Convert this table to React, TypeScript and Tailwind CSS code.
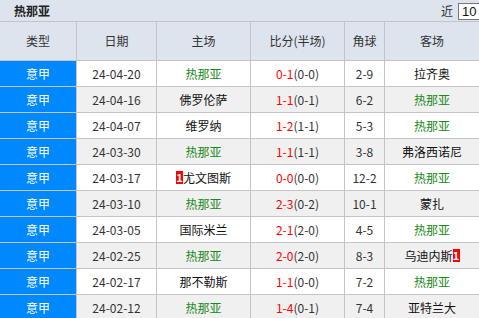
import React from "react";

type Row = {
  date: string;
  home: string;
  homeGreen?: boolean;
  homeBadge?: boolean;
  ft: string;
  ht: string;
  corner: string;
  away: string;
  awayGreen?: boolean;
  awayBadge?: boolean;
};

const rows: Row[] = [
  { date: "24-04-20", home: "热那亚", homeGreen: true, ft: "0-1", ht: "(0-0)", corner: "2-9", away: "拉齐奥" },
  { date: "24-04-16", home: "佛罗伦萨", ft: "1-1", ht: "(0-1)", corner: "6-2", away: "热那亚", awayGreen: true },
  { date: "24-04-07", home: "维罗纳", ft: "1-2", ht: "(1-1)", corner: "5-3", away: "热那亚", awayGreen: true },
  { date: "24-03-30", home: "热那亚", homeGreen: true, ft: "1-1", ht: "(1-1)", corner: "3-8", away: "弗洛西诺尼" },
  { date: "24-03-17", home: "尤文图斯", homeBadge: true, ft: "0-0", ht: "(0-0)", corner: "12-2", away: "热那亚", awayGreen: true },
  { date: "24-03-10", home: "热那亚", homeGreen: true, ft: "2-3", ht: "(0-2)", corner: "10-1", away: "蒙扎" },
  { date: "24-03-05", home: "国际米兰", ft: "2-1", ht: "(2-0)", corner: "4-5", away: "热那亚", awayGreen: true },
  { date: "24-02-25", home: "热那亚", homeGreen: true, ft: "2-0", ht: "(2-0)", corner: "8-3", away: "乌迪内斯", awayBadge: true },
  { date: "24-02-17", home: "那不勒斯", ft: "1-1", ht: "(0-0)", corner: "7-2", away: "热那亚", awayGreen: true },
  { date: "24-02-12", home: "热那亚", homeGreen: true, ft: "1-4", ht: "(0-1)", corner: "7-4", away: "亚特兰大" },
];

const Badge = () => (
  <span className="inline-flex items-center justify-center w-[7px] h-[13px] bg-[#ff0000] text-white font-bold text-[11px] leading-none">
    1
  </span>
);

const Team = ({ name, green, badge, badgeRight }: { name: string; green?: boolean; badge?: boolean; badgeRight?: boolean }) => (
  <span className={"inline-flex items-center " + (green ? "text-[#1a8a1a]" : "text-[#111]")}>
    {badge && !badgeRight && <Badge />}
    {name}
    {badge && badgeRight && <Badge />}
  </span>
);

export default function App() {
  return (
    <div
      className="w-[479px] h-[318px] overflow-hidden bg-white text-[12px] text-[#333]"
      style={{ fontFamily: '"Noto Sans CJK SC", "Noto Sans", sans-serif' }}
    >
      <div className="h-[22px] bg-[#dde4ee] border-b border-[#c4c4c4] flex items-center justify-between">
        <span className="pl-[14px] font-bold text-[#222] text-[12px]">热那亚</span>
        <div className="flex items-center h-full">
          <span className="text-[#333] mr-[5px]">近</span>
          <div className="w-[30px] h-[17px] border border-[#767676] bg-white text-[#111] text-[13px] leading-[15px] pl-[3px] -mr-[9px] mt-[1px]" style={{ fontFamily: '"Liberation Sans", sans-serif' }}>
            10
          </div>
        </div>
      </div>
      <div className="flex h-[39px] bg-[#dde4ee] border-b border-[#c4c4c4] text-[#333]">
        <div className="w-[77px] border-r border-[#c4c4c4] flex items-center justify-center">类型</div>
        <div className="w-[80px] border-r border-[#c4c4c4] flex items-center justify-center">日期</div>
        <div className="w-[94px] border-r border-[#c4c4c4] flex items-center justify-center">主场</div>
        <div className="w-[94px] border-r border-[#c4c4c4] flex items-center justify-center">比分(半场)</div>
        <div className="w-[40px] border-r border-[#c4c4c4] flex items-center justify-center">角球</div>
        <div className="flex-1 flex items-center justify-center">客场</div>
      </div>
      {rows.map((r, i) => (
        <div
          key={i}
          className={"flex h-[26px] border-b border-[#c4c4c4] " + (i % 2 === 0 ? "bg-white" : "bg-[#f0f0f0]")}
        >
          <div className="w-[77px] border-r border-[#c4c4c4] bg-[#0088ff] text-white flex items-center justify-center">意甲</div>
          <div className="w-[80px] border-r border-[#c4c4c4] flex items-center justify-center text-[#333]">{r.date}</div>
          <div className="w-[94px] border-r border-[#c4c4c4] flex items-center justify-center">
            <Team name={r.home} green={r.homeGreen} badge={r.homeBadge} />
          </div>
          <div className="w-[94px] border-r border-[#c4c4c4] flex items-center justify-center">
            <span className="text-[#ff0000]">{r.ft}</span>
            <span className="text-[#333]">{r.ht}</span>
          </div>
          <div className="w-[40px] border-r border-[#c4c4c4] flex items-center justify-center text-[#333]">{r.corner}</div>
          <div className="flex-1 flex items-center justify-center">
            <Team name={r.away} green={r.awayGreen} badge={r.awayBadge} badgeRight />
          </div>
        </div>
      ))}
    </div>
  );
}
